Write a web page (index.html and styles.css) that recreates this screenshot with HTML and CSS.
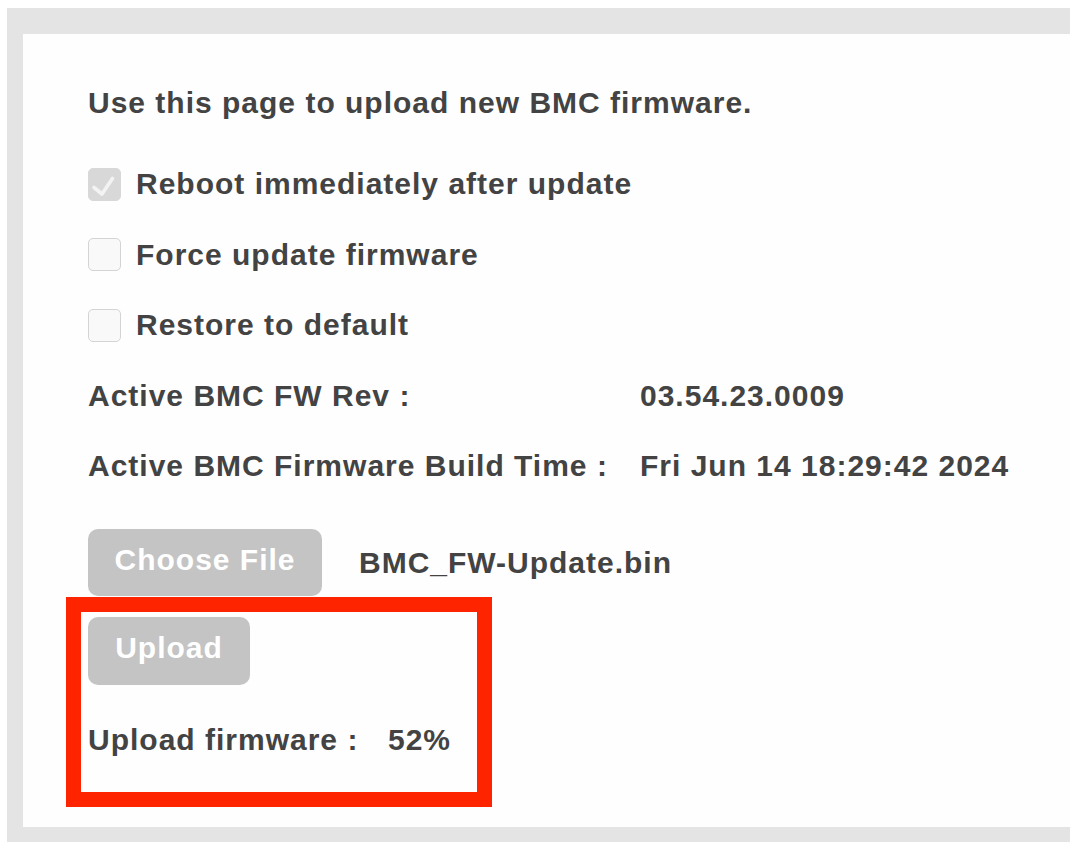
FILE: index.html
```html
<!DOCTYPE html>
<html lang="en">
<head>
<meta charset="utf-8">
<title>Firmware Update</title>
<link rel="stylesheet" href="styles.css">
</head>
<body>
<div class="frame">
  <main class="panel">
    <p class="intro">Use this page to upload new BMC firmware.</p>

    <div class="rows">
      <label class="check-row">
        <span class="box box-checked">
          <svg viewBox="0 0 33 33" width="33" height="33" aria-hidden="true">
            <path d="M6 19.5 L14 26 L24.5 10.5" fill="none" stroke="#f3f3f3" stroke-width="3.6" stroke-linecap="round" stroke-linejoin="round"/>
          </svg>
        </span>
        <span>Reboot immediately after update</span>
      </label>
      <label class="check-row">
        <span class="box"></span>
        <span>Force update firmware</span>
      </label>
      <label class="check-row">
        <span class="box"></span>
        <span>Restore to default</span>
      </label>
      <div class="info-row">
        <span class="info-label">Active BMC FW Rev :</span>
        <span>03.54.23.0009</span>
      </div>
      <div class="info-row">
        <span class="info-label">Active BMC Firmware Build Time :</span>
        <span>Fri Jun 14 18:29:42 2024</span>
      </div>
    </div>

    <div class="file-row">
      <button class="btn btn-choose" type="button">Choose File</button>
      <span class="file-name">BMC_FW-Update.bin</span>
    </div>

    <div class="upload-area">
      <button class="btn btn-upload" type="button">Upload</button>
      <div class="progress-row">
        <span class="progress-label">Upload firmware :</span>
        <span>52%</span>
      </div>
      <div class="highlight"></div>
    </div>
  </main>
</div>
</body>
</html>
```

FILE: styles.css
```css
html, body {
  margin: 0;
  padding: 0;
  background: #ffffff;
}

body {
  font-family: "Liberation Sans", Arial, Helvetica, sans-serif;
  font-weight: bold;
  font-size: 30px;
  letter-spacing: 1px;
  color: #434343;
}

.frame {
  margin: 8px 0 0 7px;
  height: 834px;
  box-sizing: border-box;
  background: #e4e4e4;
  padding: 26px 0 15px 16px;
}

.panel {
  height: 100%;
  box-sizing: border-box;
  background: #fefefe;
  padding: 52px 0 0 65px;
}

.intro {
  margin: 0;
  height: 34px;
  line-height: 34px;
}

.rows {
  margin-top: 47px;
  display: flex;
  flex-direction: column;
  gap: 36.5px;
}

.check-row,
.info-row {
  display: flex;
  align-items: center;
  height: 34px;
  line-height: 34px;
}

.box {
  width: 31px;
  height: 31px;
  border: 1px solid #d4d4d4;
  border-radius: 5px;
  background: #f9f9f9;
  margin-right: 15px;
  flex: none;
  position: relative;
}

.box-checked {
  background: #d8d8d8;
  border-color: #d8d8d8;
}

.box-checked svg {
  position: absolute;
  left: -1px;
  top: -1px;
}

.info-label {
  width: 552px;
  flex: none;
}

.file-row {
  margin-top: 46px;
  display: flex;
  align-items: center;
}

.btn {
  font: inherit;
  letter-spacing: inherit;
  color: #ffffff;
  background: #c4c4c4;
  border: none;
  border-radius: 10px;
  padding: 0 0 6px;
  height: 67px;
  cursor: default;
}

.btn-choose {
  width: 234px;
}

.file-name {
  margin-left: 37px;
}

.upload-area {
  position: relative;
  margin-top: 21px;
  width: 380px;
}

.btn-upload {
  width: 162px;
  height: 68px;
}

.progress-row {
  margin-top: 38px;
  display: flex;
  height: 34px;
  line-height: 34px;
}

.progress-label {
  width: 300px;
  flex: none;
}

/* red annotation frame around the upload controls */
.highlight {
  position: absolute;
  left: -22px;
  top: -20px;
  width: 426px;
  height: 210px;
  box-sizing: border-box;
  border: 15px solid #ff2400;
  pointer-events: none;
}
```
